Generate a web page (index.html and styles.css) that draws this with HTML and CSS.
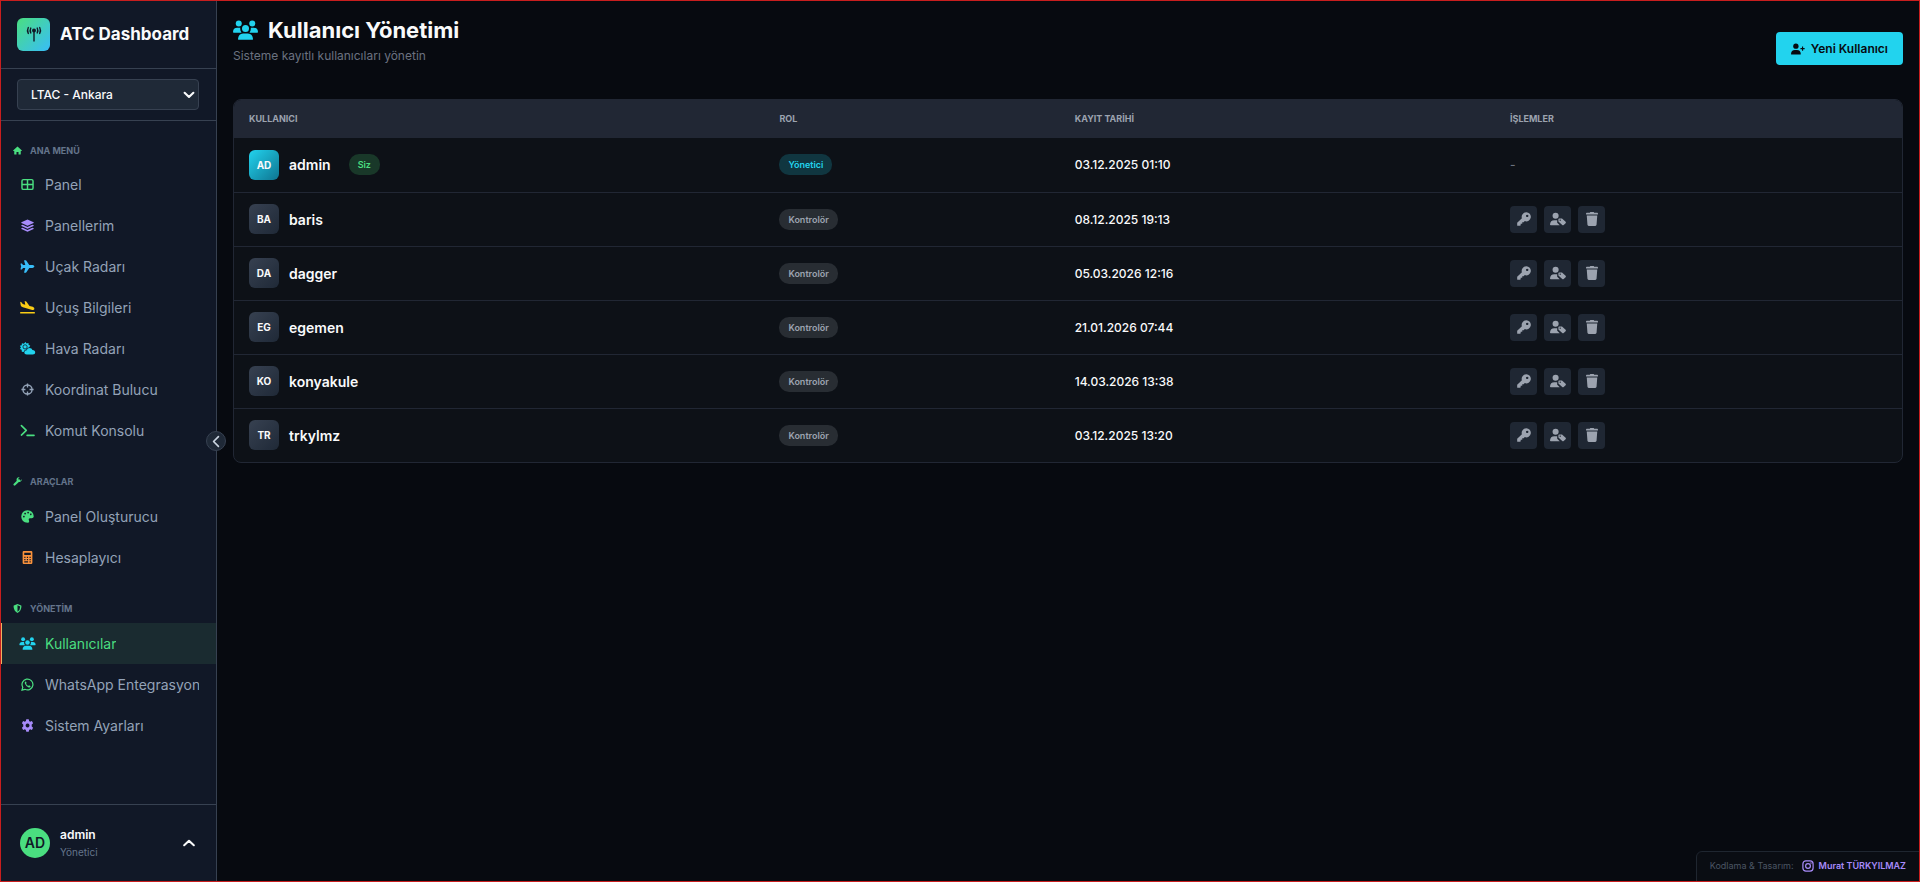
FILE: index.html
```html
<!DOCTYPE html>
<html lang="tr">
<head>
    <meta charset="UTF-8">
    <meta name="viewport" content="width=device-width, initial-scale=1.0">
    <title>ATC Dashboard - Kullanıcı Yönetimi</title>
    <link rel="stylesheet" href="styles.css">
</head>
<body>
    <!-- Icon set -->
    <svg class="icon-set" aria-hidden="true">
        <symbol id="i-tower" viewBox="0 0 18 16"><circle cx="9" cy="4.500" r="2"/><path d="M8.300 5h1.400v10.500H8.300z"/><path d="M5.800 2q-1.300 2.500 0 5M3.300 1.500q-1.600 3 0 6M12.200 2q1.300 2.500 0 5M14.700 1.500q1.600 3 0 6" fill="none" stroke="currentColor" stroke-width="1.400" stroke-linecap="round"/></symbol>
        <symbol id="i-home" viewBox="0 0 16 16"><path d="M8 1 .6 7.600q-.8 1 .4 1.400h1.200v5q0 1 1 1h3v-4.500h3.600V15h3q1 0 1-1V9H15q1.200-.4.400-1.400z"/></symbol>
        <symbol id="i-grid" viewBox="0 0 16 16"><path d="M3 2h10q1.800 0 1.800 1.800v8.400q0 1.800-1.800 1.800H3q-1.800 0-1.800-1.800V3.800Q1.200 2 3 2zM8 2v12M1.200 8h13.600" fill="none" stroke="currentColor" stroke-width="1.800"/></symbol>
        <symbol id="i-layers" viewBox="0 0 16 16"><path d="M8 .6 15.500 4Q16 4.400 15.500 4.800L8 8.200.5 4.800Q0 4.400.5 4zM2 7l6 2.700L14 7l1.500.7q.5.400 0 .8L8 12 .5 8.500q-.5-.4 0-.8zM2 10.700l6 2.700 6-2.700 1.500.7q.5.400 0 .8L8 15.600.5 12.200q-.5-.4 0-.8z"/></symbol>
        <symbol id="i-plane" viewBox="0 0 18 16"><path d="M15.200 6.300q2.300.5 2.300 1.700t-2.300 1.700h-4L7.400 15.300q-.2.400-.8.400H5.100q-.5 0-.3-.6l1.500-5.400H3.500l-1.400 1.900H.7q-.5 0-.3-.5L1.200 8 .4 4.900q-.2-.5.300-.5h1.400l1.400 1.900h2.800L4.800.9q-.2-.6.300-.6h1.500q.6 0 .8.400l3.800 5.600z"/></symbol>
        <symbol id="i-landing" viewBox="0 0 20 16"><path d="M1 13.500h18v2H1zM1 1l1.500.4 1.700 2.300 3 .8L6.500 0l2 .5 4 5.500 4 1.200q2.200 1 2 2.600-.3 1.500-2.700 1.200L4.300 7.800Q2 7.200 1.600 5.200z"/></symbol>
        <symbol id="i-cloud-sun" viewBox="0 0 20 16"><path d="m7.500 0 1.400 1.800 2.300-.5.200 2.400 2 .7-1.200 2q-2.600.2-3.600 2.800-2.800.4-3.400 3L3 12l-.2-2.500L.6 8.600 1.900 6.700.6 4.600l2.300-.7.200-2.400 2.400.5z"/><circle cx="7" cy="6" r="2.600" fill="none" stroke="#111827" stroke-width="1"/><path d="M9 15.500q-3 0-3-2.600t3-2.700q.8-2.700 3.600-2.700 2.700 0 3.500 2.400 3.400.2 3.400 2.900 0 2.600-3 2.700z"/></symbol>
        <symbol id="i-cross" viewBox="0 0 16 16"><circle cx="8" cy="8" r="5.600" fill="none" stroke="currentColor" stroke-width="1.700"/><path d="M8 .5v5M8 10.500v5M.5 8h5M10.500 8h5" stroke="currentColor" stroke-width="1.700"/></symbol>
        <symbol id="i-terminal" viewBox="0 0 18 16"><path d="m1.500 2 6 5.800-6 5.800M8.500 14H17" fill="none" stroke="currentColor" stroke-width="2" stroke-linecap="round" stroke-linejoin="round"/></symbol>
        <symbol id="i-wrench" viewBox="0 0 16 16"><path d="M10.500 6 2.800 13.400" stroke="currentColor" stroke-width="4" stroke-linecap="round"/><path d="M15.500 4.200 12.800 6.800 9.800 6.200 9.200 3.200 11.900.6Q8.700-.2 7 2.300q-1.600 2.800.2 5.200 2.600 2.600 5.800 1 3-1.700 2.500-4.300z"/></symbol>
        <symbol id="i-palette" viewBox="0 0 16 16"><path fill-rule="evenodd" d="M8 .3Q15.300.8 15.700 8q-.2 2-2.500 2h-2.300q-1.700.2-1.400 1.900l.6 1.800q.1 1.900-2.100 2Q.6 15 .3 8 .8.800 8 .3zM3.500 7a1 1 0 1 0 .1 0zM5 3.300a1 1 0 1 0 .1 0zM8.700 2.200a1 1 0 1 0 .1 0zM12 4.200a1 1 0 1 0 .1 0z"/></symbol>
        <symbol id="i-calc" viewBox="0 0 16 16"><path fill-rule="evenodd" d="M3.500 0h9Q14 0 14 1.500v13q0 1.500-1.500 1.500h-9Q2 16 2 14.500v-13Q2 0 3.500 0zM4 2.200v2.600h8V2.200zM4 7v1.500h1.500V7zm3.200 0v1.500h1.500V7zm3.300 0v1.500H12V7zM4 9.800v1.500h1.500V9.800zm3.200 0v1.500h1.500V9.800zm3.300 0v1.500H12V9.800zM4 12.500V14h4.700v-1.500zm6.500 0V14H12v-1.500z"/></symbol>
        <symbol id="i-shield" viewBox="0 0 16 16"><path fill-rule="evenodd" d="m8 0 6.500 2.600q.5.300.5.800Q15 12.300 8 16 1 12.300 1 3.400q0-.5.500-.8zM8 2.200v11.500q4.700-2.800 4.900-9.400z"/></symbol>
        <symbol id="i-users" viewBox="0 0 20 16"><circle cx="4.600" cy="2.700" r="2.400"/><circle cx="15.400" cy="2.700" r="2.400"/><circle cx="10" cy="6.800" r="2.800"/><path d="M0 9.500Q.2 6.200 3.300 6.200h2.500q-.3 2 1 3.900H.6q-.6 0-.6-.6zM20 9.500q-.2-3.300-3.300-3.300h-2.500q.3 2-1 3.900h6.200q.6 0 .6-.6zM4 15.100q.3-4.300 4-4.400h4q3.700.1 4 4.400 0 .7-.7.700H4.700q-.7 0-.7-.7z"/></symbol>
        <symbol id="i-whatsapp" viewBox="0 0 16 16"><path d="M1.200 14.900 2.200 11.400A6.700 6.700 0 1 1 4.800 13.900z" fill="none" stroke="currentColor" stroke-width="1.500"/><path d="M5.600 4.300q-1.500.8-.9 2.600 1.300 3.500 4.800 4.800 1.800.3 2.300-1.500l-.2-.5-1.800-.8-.9 1Q7 9 6.200 7.200l.7-.9L6.200 4.500z"/></symbol>
        <symbol id="i-gear" viewBox="0 0 16 16"><path fill-rule="evenodd" d="M6.500.4h3l.5 2.200 1.200.7 2.200-.7 1.500 2.600-1.700 1.600v2.400l1.700 1.600-1.500 2.600-2.200-.7-1.200.7-.5 2.200h-3L6 13.400l-1.200-.7-2.200.7-1.500-2.600 1.700-1.600V6.800L1.100 5.200l1.500-2.600 2.200.7L6 2.600zM8 5.600A2.400 2.400 0 1 0 8.100 5.600z"/></symbol>
        <symbol id="i-left" viewBox="0 0 12 16"><path d="M9 2 3 8l6 6" fill="none" stroke="currentColor" stroke-width="2" stroke-linecap="round" stroke-linejoin="round"/></symbol>
        <symbol id="i-up" viewBox="0 0 16 10"><path d="m2.500 7.500 5.500-5 5.500 5" fill="none" stroke="currentColor" stroke-width="2.400" stroke-linecap="round" stroke-linejoin="round"/></symbol>
        <symbol id="i-down" viewBox="0 0 16 10"><path d="m3 2.500 5 4.800 5-4.800" fill="none" stroke="currentColor" stroke-width="2.400" stroke-linecap="round" stroke-linejoin="round"/></symbol>
        <symbol id="i-user-plus" viewBox="0 0 20 16"><circle cx="7" cy="4" r="3.800"/><path d="M0 15q.3-5.500 5.500-5.500h3Q13.700 9.500 14 15q0 .8-.9.800H.9Q0 15.800 0 15z"/><path d="M16.500 4.500v6M13.500 7.500h6" stroke="currentColor" stroke-width="1.600"/></symbol>
        <symbol id="i-key" viewBox="0 0 16 16"><path fill-rule="evenodd" d="M10.500.3a5.200 5.200 0 1 1-1.600 10.100L7.600 11.700H6v1.800H4.200v1.700l-.7.600H.9q-.7 0-.7-.7v-2.700L5.600 7.100A5.200 5.200 0 0 1 10.500.3zM11.600 3a1.400 1.400 0 1 0 .1 0z"/></symbol>
        <symbol id="i-user-tag" viewBox="0 0 20 16"><circle cx="7" cy="4" r="3.800"/><path d="M0 15q.3-5.500 5.500-5.500H9v3.200l3.200 3.100H.9Q0 15.800 0 15z"/><path fill-rule="evenodd" d="M10.500 8.300q0-1 1-1H15l4.500 4.200q.8.900 0 1.800l-2.400 2.300q-.9.700-1.800 0l-4.800-4.500zM12.700 8.700a.8.800 0 1 0 .1 0z"/></symbol>
        <symbol id="i-trash" viewBox="0 0 16 16"><path d="M5.500.8 6 0h4l.5.800H14q.8 0 .8.800v1.300H1.200V1.600q0-.8.800-.8zM2 4h12l-.8 10.700q-.2 1.300-1.400 1.300H4.200q-1.200 0-1.400-1.300z"/></symbol>
        <symbol id="i-instagram" viewBox="0 0 16 16"><rect x="1.200" y="1.200" width="13.600" height="13.600" rx="4" fill="none" stroke="currentColor" stroke-width="1.600"/><circle cx="8" cy="8" r="3.200" fill="none" stroke="currentColor" stroke-width="1.600"/><circle cx="12" cy="4" r="1"/></symbol>
    </svg>

    <div class="app">
        <aside class="sidebar">
            <div class="brand">
                <span class="brand-logo"><svg class="icon brand-icon"><use href="#i-tower"/></svg></span>
                <span class="brand-name">ATC Dashboard</span>
            </div>

            <div class="airport">
                <select class="airport-select" aria-label="Havalimanı">
                    <option>LTAC - Ankara</option>
                </select>
                <svg class="icon airport-arrow"><use href="#i-down"/></svg>
            </div>

            <nav class="menu">
                <h2 class="menu-title"><svg class="icon"><use href="#i-home"/></svg>ANA MENÜ</h2>
                <a class="menu-item" href="#"><svg class="icon green"><use href="#i-grid"/></svg><span>Panel</span></a>
                <a class="menu-item" href="#"><svg class="icon purple"><use href="#i-layers"/></svg><span>Panellerim</span></a>
                <a class="menu-item" href="#"><svg class="icon blue"><use href="#i-plane"/></svg><span>Uçak Radarı</span></a>
                <a class="menu-item" href="#"><svg class="icon yellow wide"><use href="#i-landing"/></svg><span>Uçuş Bilgileri</span></a>
                <a class="menu-item" href="#"><svg class="icon cyan wide"><use href="#i-cloud-sun"/></svg><span>Hava Radarı</span></a>
                <a class="menu-item" href="#"><svg class="icon gray"><use href="#i-cross"/></svg><span>Koordinat Bulucu</span></a>
                <a class="menu-item" href="#"><svg class="icon green"><use href="#i-terminal"/></svg><span>Komut Konsolu</span></a>

                <h2 class="menu-title"><svg class="icon"><use href="#i-wrench"/></svg>ARAÇLAR</h2>
                <a class="menu-item" href="#"><svg class="icon green"><use href="#i-palette"/></svg><span>Panel Oluşturucu</span></a>
                <a class="menu-item" href="#"><svg class="icon orange"><use href="#i-calc"/></svg><span>Hesaplayıcı</span></a>

                <h2 class="menu-title"><svg class="icon"><use href="#i-shield"/></svg>YÖNETİM</h2>
                <a class="menu-item active" href="#"><svg class="icon cyan wide"><use href="#i-users"/></svg><span>Kullanıcılar</span></a>
                <a class="menu-item" href="#"><svg class="icon green"><use href="#i-whatsapp"/></svg><span>WhatsApp Entegrasyonu</span></a>
                <a class="menu-item" href="#"><svg class="icon purple"><use href="#i-gear"/></svg><span>Sistem Ayarları</span></a>
            </nav>

            <div class="profile">
                <span class="profile-avatar">AD</span>
                <div class="profile-info">
                    <div class="profile-name">admin</div>
                    <div class="profile-role">Yönetici</div>
                </div>
                <button class="profile-toggle" aria-label="Profil menüsü"><svg class="icon"><use href="#i-up"/></svg></button>
            </div>

            <button class="collapse" aria-label="Menüyü daralt"><svg class="icon"><use href="#i-left"/></svg></button>
        </aside>

        <main class="content">
            <header class="page-header">
                <div>
                    <h1 class="page-title"><svg class="icon"><use href="#i-users"/></svg>Kullanıcı Yönetimi</h1>
                    <p class="page-subtitle">Sisteme kayıtlı kullanıcıları yönetin</p>
                </div>
                <button class="new-user"><svg class="icon"><use href="#i-user-plus"/></svg>Yeni Kullanıcı</button>
            </header>

            <div class="card">
                <table class="users">
                    <thead>
                        <tr>
                            <th class="col-user">KULLANICI</th>
                            <th class="col-role">ROL</th>
                            <th class="col-date">KAYIT TARİHİ</th>
                            <th>İŞLEMLER</th>
                        </tr>
                    </thead>
                    <tbody>
                        <tr>
                            <td><div class="user"><span class="avatar admin">AD</span><span>admin</span><span class="badge self">Siz</span></div></td>
                            <td><span class="badge manager">Yönetici</span></td>
                            <td>03.12.2025 01:10</td>
                            <td><span class="none">-</span></td>
                        </tr>
                        <tr>
                            <td><div class="user"><span class="avatar">BA</span><span>baris</span></div></td>
                            <td><span class="badge">Kontrolör</span></td>
                            <td>08.12.2025 19:13</td>
                            <td><div class="actions"><button aria-label="Şifre"><svg class="icon"><use href="#i-key"/></svg></button><button aria-label="Rol"><svg class="icon wide"><use href="#i-user-tag"/></svg></button><button aria-label="Sil"><svg class="icon"><use href="#i-trash"/></svg></button></div></td>
                        </tr>
                        <tr>
                            <td><div class="user"><span class="avatar">DA</span><span>dagger</span></div></td>
                            <td><span class="badge">Kontrolör</span></td>
                            <td>05.03.2026 12:16</td>
                            <td><div class="actions"><button aria-label="Şifre"><svg class="icon"><use href="#i-key"/></svg></button><button aria-label="Rol"><svg class="icon wide"><use href="#i-user-tag"/></svg></button><button aria-label="Sil"><svg class="icon"><use href="#i-trash"/></svg></button></div></td>
                        </tr>
                        <tr>
                            <td><div class="user"><span class="avatar">EG</span><span>egemen</span></div></td>
                            <td><span class="badge">Kontrolör</span></td>
                            <td>21.01.2026 07:44</td>
                            <td><div class="actions"><button aria-label="Şifre"><svg class="icon"><use href="#i-key"/></svg></button><button aria-label="Rol"><svg class="icon wide"><use href="#i-user-tag"/></svg></button><button aria-label="Sil"><svg class="icon"><use href="#i-trash"/></svg></button></div></td>
                        </tr>
                        <tr>
                            <td><div class="user"><span class="avatar">KO</span><span>konyakule</span></div></td>
                            <td><span class="badge">Kontrolör</span></td>
                            <td>14.03.2026 13:38</td>
                            <td><div class="actions"><button aria-label="Şifre"><svg class="icon"><use href="#i-key"/></svg></button><button aria-label="Rol"><svg class="icon wide"><use href="#i-user-tag"/></svg></button><button aria-label="Sil"><svg class="icon"><use href="#i-trash"/></svg></button></div></td>
                        </tr>
                        <tr>
                            <td><div class="user"><span class="avatar">TR</span><span>trkylmz</span></div></td>
                            <td><span class="badge">Kontrolör</span></td>
                            <td>03.12.2025 13:20</td>
                            <td><div class="actions"><button aria-label="Şifre"><svg class="icon"><use href="#i-key"/></svg></button><button aria-label="Rol"><svg class="icon wide"><use href="#i-user-tag"/></svg></button><button aria-label="Sil"><svg class="icon"><use href="#i-trash"/></svg></button></div></td>
                        </tr>
                    </tbody>
                </table>
            </div>
        </main>
    </div>

    <div class="credit">
        Kodlama &amp; Tasarım:
        <a href="#"><svg class="icon"><use href="#i-instagram"/></svg>Murat TÜRKYILMAZ</a>
    </div>
    <div class="frame"></div>
</body>
</html>
```
FILE: styles.css
```css
* {
    box-sizing: border-box;
    margin: 0;
    padding: 0;
}
body {
    font-family: Inter, "Open Sans", sans-serif;
    font-size: 14px;
    color: #f9fafb;
    background-color: #070a10;
}
button, select {
    font-family: inherit;
    cursor: pointer;
}
a {
    text-decoration: none;
}
.icon-set {
    display: none;
}
.icon {
    width: 14px;
    height: 14px;
    fill: currentColor;
    flex-shrink: 0;
}
.icon.wide {
    width: 16px;
}
.app {
    display: flex;
    min-height: 100vh;
}

/* Sidebar */
.sidebar {
    position: relative;
    display: flex;
    flex-direction: column;
    width: 217px;
    flex-shrink: 0;
    background-color: #111827;
    border-right: 1px solid #374151;
}
.brand {
    display: flex;
    align-items: center;
    gap: 10px;
    height: 69px;
    padding: 0 17px;
    border-bottom: 1px solid #374151;
}
.brand-logo {
    display: flex;
    align-items: center;
    justify-content: center;
    width: 33px;
    height: 33px;
    border-radius: 6px;
    color: #111827;
    background: linear-gradient(135deg, #4ade80, #38bdf8);
}
.brand-icon {
    width: 18px;
    height: 16px;
}
.brand-name {
    font-size: 17px;
    font-weight: 700;
    white-space: nowrap;
}
.airport {
    position: relative;
    padding: 10px 17px;
    border-bottom: 1px solid #374151;
}
.airport-select {
    display: block;
    width: 100%;
    height: 31px;
    padding: 0 13px;
    appearance: none;
    font-size: 12px;
    font-weight: 500;
    color: #f9fafb;
    background-color: #1f2937;
    border: 1px solid #374151;
    border-radius: 4px;
}
.airport-arrow {
    position: absolute;
    top: 19px;
    right: 20px;
    pointer-events: none;
}
.menu {
    flex: 1;
}
.menu-title {
    display: flex;
    align-items: center;
    gap: 8px;
    height: 45px;
    padding: 16px 13px 0;
    font-size: 9px;
    font-weight: 700;
    color: #64748b;
}
.menu-title:first-child {
    height: 43px;
}
.menu-title .icon {
    width: 9px;
    height: 9px;
    color: #4ade80;
}
.menu-item {
    display: flex;
    align-items: center;
    gap: 9px;
    height: 41px;
    padding: 0 17px 0 19px;
    color: #94a3b8;
}
.menu-item .icon {
    width: 17px;
    height: 13px;
}
.menu-item span {
    overflow: hidden;
    white-space: nowrap;
}
.menu-item.active {
    color: #4ade80;
    background-color: #1a2b30;
    border-left: 2px solid #f0b060;
    padding-left: 17px;
}
/* colours sit on the icons, after the link colour */
.green { color: #4ade80; }
.purple { color: #a78bfa; }
.blue { color: #38bdf8; }
.yellow { color: #facc15; }
.cyan { color: #22d3ee; }
.gray { color: #94a3b8; }
.orange { color: #fb923c; }

.profile {
    display: flex;
    align-items: center;
    gap: 10px;
    height: 78px;
    padding: 0 20px 2px;
    border-top: 1px solid #374151;
}
.profile-avatar {
    display: flex;
    align-items: center;
    justify-content: center;
    width: 30px;
    height: 30px;
    border-radius: 50%;
    font-weight: 600;
    color: #111827;
    background-color: #4ade80;
}
.profile-info {
    flex: 1;
}
.profile-name {
    font-size: 12px;
    font-weight: 600;
    line-height: 18px;
}
.profile-role {
    font-size: 10px;
    line-height: 16px;
    color: #64748b;
}
.profile-toggle {
    display: flex;
    border: none;
    background: none;
    color: #f9fafb;
}
.collapse {
    position: absolute;
    top: 50%;
    right: -10px;
    display: flex;
    align-items: center;
    justify-content: center;
    width: 20px;
    height: 20px;
    margin-top: -10px;
    color: #cbd5e1;
    background-color: #1f2937;
    border: 1px solid #374151;
    border-radius: 50%;
}
.collapse .icon {
    width: 12px;
    height: 13px;
}

/* Page */
.content {
    flex: 1;
    min-width: 0;
    padding: 16px 17px 40px 16px;
}
.page-header {
    display: flex;
    align-items: center;
    justify-content: space-between;
    height: 65px;
    margin-bottom: 18px;
}
.page-header > div {
    align-self: flex-start;
}
.page-title {
    display: flex;
    align-items: center;
    gap: 10px;
    font-size: 22px;
    font-weight: 700;
    line-height: 28px;
}
.page-title .icon {
    width: 25px;
    height: 22px;
    color: #22d3ee;
}
.page-subtitle {
    font-size: 12px;
    line-height: 24px;
    color: #6b7280;
}
.new-user {
    display: flex;
    align-items: center;
    gap: 6px;
    height: 33px;
    padding: 0 15px;
    font-size: 12px;
    font-weight: 600;
    color: #070a10;
    background-color: #22d3ee;
    border: none;
    border-radius: 4px;
}
.new-user .icon {
    height: 12px;
}

/* Users table */
.card {
    overflow: hidden;
    background-color: #0d1117;
    border: 1px solid #212734;
    border-radius: 8px;
}
.users {
    width: 100%;
    table-layout: fixed;
    border-collapse: collapse;
}
.users th {
    height: 38px;
    padding: 0 15px 1px;
    text-align: left;
    font-size: 9px;
    font-weight: 700;
    color: #9ca3af;
    background-color: #212734;
}
.users td {
    height: 54px;
    padding: 0 15px;
    font-size: 12px;
    font-weight: 500;
    border-bottom: 1px solid #212734;
}
.users tr:last-child td {
    border-bottom: none;
}
.col-user { width: 31.8%; }
.col-role { width: 17.7%; }
.col-date { width: 26.1%; }

.user {
    display: flex;
    align-items: center;
    gap: 10px;
    font-size: 14px;
    font-weight: 600;
}
.avatar {
    display: flex;
    align-items: center;
    justify-content: center;
    width: 30px;
    height: 30px;
    border-radius: 6px;
    font-size: 10px;
    font-weight: 700;
    background: linear-gradient(135deg, #374151, #1f2937);
}
.avatar.admin {
    background: linear-gradient(135deg, #22d3ee, #0e7490);
}
.badge {
    display: inline-block;
    padding: 0 9px;
    font-size: 9px;
    font-weight: 600;
    line-height: 21px;
    color: #9ca3af;
    background-color: #282d33;
    border-radius: 10px;
}
.badge.manager {
    color: #22d3ee;
    background-color: #103640;
}
.badge.self {
    margin-left: 8px;
    color: #4ade80;
    background-color: #193829;
}
.none {
    color: #6b7280;
}
.actions {
    display: flex;
    gap: 7px;
}
.actions button {
    display: flex;
    align-items: center;
    justify-content: center;
    width: 27px;
    height: 27px;
    color: #9ca3af;
    background-color: #1f2733;
    border: none;
    border-radius: 4px;
}

/* Footer credit, pinned to the corner */
.credit {
    position: fixed;
    right: 0;
    bottom: 0;
    display: flex;
    align-items: center;
    gap: 8px;
    height: 31px;
    padding: 0 13px 2px;
    font-size: 9px;
    color: #4b5563;
    background-color: #0a0d13;
    border: 1px solid #1f2630;
    border-radius: 6px 0 0 0;
}
.credit a {
    display: flex;
    align-items: center;
    gap: 5px;
    font-weight: 600;
    color: #a78bfa;
}
.credit .icon {
    width: 12px;
    height: 12px;
}
.frame {
    position: fixed;
    inset: 0;
    border: 1px solid #c81e1e;
    pointer-events: none;
}
```
